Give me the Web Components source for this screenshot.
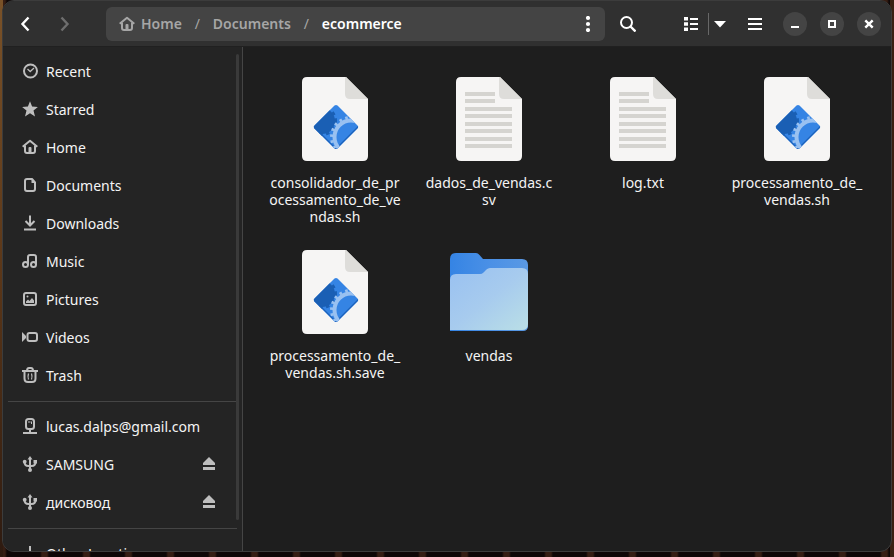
<!DOCTYPE html>
<html lang="en">
<head>
<meta charset="utf-8">
<title>ecommerce</title>
<style>
  html, body { height: 100%; }
  body {
    margin: 0;
    overflow: hidden;
    font: 14px/17px "Noto Sans", "Open Sans", sans-serif;
    color: #f4f4f4;
    background:
      linear-gradient(#7a5228, #5a3618 50%, #2d1a10) left / 3px 100% no-repeat,
      linear-gradient(90deg, transparent calc(100% - 4px), #3a2013 0) no-repeat,
      repeating-linear-gradient(90deg, #361e14 0 5px, #0e0707 7px 40px, #361e14 42px);
  }
</style>
</head>
<body>
<file-window>
  <header-bar slot="header">
    <path-crumb icon="home">Home</path-crumb>
    <path-crumb>Documents</path-crumb>
    <path-crumb current>ecommerce</path-crumb>
  </header-bar>
  <side-bar slot="sidebar">
    <place-row icon="recent">Recent</place-row>
    <place-row icon="star">Starred</place-row>
    <place-row icon="home">Home</place-row>
    <place-row icon="doc">Documents</place-row>
    <place-row icon="down">Downloads</place-row>
    <place-row icon="music">Music</place-row>
    <place-row icon="pic">Pictures</place-row>
    <place-row icon="video">Videos</place-row>
    <place-row icon="trash">Trash</place-row>
    <side-rule></side-rule>
    <place-row icon="remote">lucas.dalps@gmail.com</place-row>
    <place-row icon="usb" ejectable>SAMSUNG</place-row>
    <place-row icon="usb" ejectable>дисковод</place-row>
    <side-rule></side-rule>
    <place-row icon="plus">Other Locations</place-row>
  </side-bar>
  <file-grid slot="files">
    <file-item kind="script">consolidador_de_pr<br>ocessamento_de_ve<br>ndas.sh</file-item>
    <file-item kind="text">dados_de_vendas.c<br>sv</file-item>
    <file-item kind="text">log.txt</file-item>
    <file-item kind="script">processamento_de_<br>vendas.sh</file-item>
    <file-item kind="script">processamento_de_<br>vendas.sh.save</file-item>
    <file-item kind="folder">vendas</file-item>
  </file-grid>
</file-window>
<script>
const svg16 = body => `<svg width="16" height="16" viewBox="0 0 16 16" fill="none" stroke="currentColor" stroke-width="2" aria-hidden="true">${body}</svg>`;
const icons = {
  recent: '<circle cx="8.500" cy="8" r="6.500"/><path d="M5.500 6l2.700 2.500L12 5" stroke-width="1.300"/>',
  star: '<path fill="currentColor" stroke="none" d="M8 0.300l2.100 5.200 5.800.4-4.400 3.700 1.500 5.900-5-3.200-5 3.200 1.500-5.900L.1 5.900l5.800-.4z"/>',
  home: '<path d="M.7 7.800L8 1.800l7.300 6" stroke-linejoin="round"/><path d="M3 6.500V12q0 2 2 2h6q2 0 2-2V6.500"/><path d="M6.500 14V9q0-1 1-1h1q1 0 1 1v5z" fill="currentColor" stroke="none"/>',
  doc: '<path d="M5 2h5l3 3.500V12q0 2-2 2H5q-2 0-2-2V4q0-2 2-2z" stroke-linejoin="round"/><path d="M9.500 2v4H13z" fill="currentColor" stroke="none"/>',
  down: '<path d="M8 .5v10M3.500 6L8 10.500 12.500 6M2 14.500h12"/>',
  music: '<circle cx="3.500" cy="11.500" r="2.500"/><circle cx="11.500" cy="11.500" r="2.500"/><path d="M6 11.500V4q0-2 2-2h4q2 0 2 2v7.500" stroke-width="2"/>',
  pic: '<rect x="2" y="2" width="12" height="12" rx="2"/><path d="M4 12V10.500l2-2 1.500 1.500L10 7l2 2.500V12z" fill="currentColor" stroke="none"/><circle cx="5.500" cy="5.500" r="1" fill="currentColor" stroke="none"/>',
  video: '<rect x="5.500" y="4" width="9.500" height="8" rx="2"/><path d="M0 3l4 4v2l-4 4z" fill="currentColor" stroke="none"/>',
  trash: '<path d="M0 4h16M2.500 4v7.500q0 3.500 3.500 3.500h4q3.500 0 3.500-3.500V4M5 4q0-3 2-3h2q2 0 2 3"/><path d="M6.500 6.500q-1 3 0 6M9.500 6.500q1 3 0 6" stroke-width="1.200"/>',
  remote: '<rect x="4" y="1" width="8" height="10" rx="2.500"/><path d="M8 11v4M1 15h14"/><path d="M6 4h2.500M9.500 3.500v2.500" stroke-width="1"/>',
  usb: '<path d="M8 2v12M2.500 6q0 4 4 4h3q4 0 4-4"/><circle cx="8" cy="14" r="2" fill="currentColor" stroke="none"/><circle cx="2.700" cy="5.700" r="1.900" fill="currentColor" stroke="none"/><rect x="11.500" y="4" width="3.500" height="3.500" fill="currentColor" stroke="none"/><path d="M8 0l2.500 3.500h-5z" fill="currentColor" stroke="none"/>',
  plus: '<path d="M8 1v14M1 8h14"/>',
  eject: '<path d="M8 1l6 6v2H2V7z" fill="currentColor" stroke="none"/><path d="M2 12.500h12" stroke-width="3"/>',
  back: '<path d="M11.500 1.500L5.500 8l6 6.500" stroke-width="2.400"/>',
  next: '<path d="M4.500 1.500L10.500 8l-6 6.500" stroke-width="2.400"/>',
  search: '<circle cx="6.500" cy="6.500" r="5.500"/><path d="M10.500 10.500l5 5" stroke-width="2.400"/>',
  list: '<path d="M7 3h8M7 8h8M7 13h8"/><path d="M1 1h4v3.600H1zM1 6.200h4v3.600H1zM1 11.400h4V15H1z" fill="currentColor" stroke="none"/>',
  arrow: '<path d="M2 5h12l-6 6.500z" fill="currentColor" stroke="none"/>',
  menu: '<path d="M1 3h14M1 8h14M1 13h14"/>',
  dots: '<g fill="currentColor" stroke="none"><circle cx="8" cy="2" r="2.100"/><circle cx="8" cy="8" r="2.100"/><circle cx="8" cy="14" r="2.100"/></g>',
  min: '<path d="M4 11h8"/>',
  max: '<rect x="5" y="5" width="6" height="6"/>',
  close: '<path d="M4.300 4.300l7.400 7.400M11.700 4.300l-7.400 7.400" stroke-width="2.400"/>'
};
const sheet = '<path d="M20 6h39l22 22v57q0 5-5 5H20q-5 0-5-5V11q0-5 5-5z" fill="#f6f5f4"/><path d="M58 6v17q0 5 5 5h18L59 6z" fill="#deddda"/>';
const art = {
  script: sheet + `
    <clipPath id="d"><path d="M47.500 34.600q1.500-1.200 3 0l20 20q1.300 1.400 0 2.800l-20 20q-1.500 1.200-3 0l-20-20q-1.300-1.400 0-2.800z"/></clipPath>
    <g clip-path="url(#d)">
      <path d="M20 30h60v50H20z" fill="#3584e4"/>
      <path d="M26 56l23 23 23-23v-2l-23 23-23-23z" fill="#1c62bb"/>
      <circle cx="35" cy="50" r="13" fill="#1a5fb4"/>
      <circle cx="35" cy="50" r="13.500" fill="none" stroke="#1a5fb4" stroke-width="3" stroke-dasharray="3.400 3.400"/>
      <circle cx="64" cy="66" r="16.500" fill="none" stroke="#99c1f1" stroke-width="4"/>
      <circle cx="64" cy="66" r="19.500" fill="none" stroke="#99c1f1" stroke-width="3" stroke-dasharray="2.600 3.500"/>
    </g>`,
  text: sheet + '<path d="M24 23h30M24 30h30M24 38h47M24 45h47M24 53h47M24 60h47M24 68h47M24 75h47" stroke="#d5d4d0" stroke-width="4"/>',
  folder: `<defs><linearGradient id="b"><stop stop-color="#3584e4"/><stop offset=".5" stop-color="#4a90e6"/><stop offset="1" stop-color="#5a99e4"/></linearGradient>
    <linearGradient id="f" x2="1" y2="1"><stop stop-color="#99c1f1"/><stop offset=".5" stop-color="#a7cbee"/><stop offset="1" stop-color="#badfe6"/></linearGradient></defs>
    <path d="M15 9h20q2 0 3.500 2l3.500 4h39q6 0 6 6v61q0 5-5 5H9V15q0-6 6-6z" fill="url(#b)"/>
    <path d="M15 30h24q2 0 3.500-1.500l3-3Q47 24 49 24h32q6 0 6 6v50q0 6-6 6H9V36q0-6 6-6z" fill="url(#f)"/>`
};
const base = `<style>
  * { box-sizing: border-box; }
  svg { display: block; flex: none; }
  button, a { font: inherit; color: inherit; text-decoration: none; }
  button { border: 0; padding: 0; background: none; display: flex; align-items: center; justify-content: center; }
</style>`;
function define(name, build) {
  customElements.define(name, class extends HTMLElement {
    constructor() { super(); this.attachShadow({ mode: 'open' }); }
    connectedCallback() { this.shadowRoot.innerHTML = base + build(this); }
  });
}

define('file-window', () => `<style>
  :host { display: block; height: 100%; padding: 0 2px 5px; box-sizing: border-box; }
  main { height: 100%; display: grid; grid-template: 46px minmax(0, 1fr) / 240px minmax(0, 1fr);
    border: 1px solid #3c3c3c; border-radius: 12px; overflow: hidden; background: #1e1e1e; }
  .top { grid-column: 1 / -1; background: #303030; border-bottom: 1px solid #202020; }
  .side { background: #242424; border-right: 1px solid #454545; overflow: hidden; }
</style>
<main><div class="top"><slot name="header"></slot></div>
<div class="side"><slot name="sidebar"></slot></div>
<div><slot name="files"></slot></div></main>`);

define('header-bar', () => {
  const b = (icon, label, cls = '') => `<button class="${cls}" aria-label="${label}">${svg16(icons[icon])}</button>`;
  return `<style>
  :host { display: flex; align-items: center; height: 45px; padding: 0 10px 0 5px; color: #fff; }
  button { width: 34px; height: 34px; flex: none; }
  .nav { display: flex; gap: 6px; margin-right: 24px; }
  .off { color: #6e6e6e; }
  nav { flex: 1; min-width: 0; height: 34px; display: flex; align-items: center; padding-left: 13px; background: #444; border-radius: 6px; }
  nav button { margin-left: auto; }
  .search { margin: 0 29px 0 6px; }
  .split { width: 22px; }
  .line { width: 1px; height: 22px; background: #686868; }
  .menu { margin: 0 11px 0 7px; }
  .win { display: flex; gap: 13px; }
  .win button { width: 24px; height: 24px; border-radius: 12px; background: #444; }
</style>
<div class="nav">${b('back', 'Back')}${b('next', 'Forward', 'off')}</div>
<nav aria-label="Path"><slot></slot>${b('dots', 'Folder menu')}</nav>
${b('search', 'Search', 'search')}
${b('list', 'List view')}<span class="line"></span>${b('arrow', 'View options', 'split')}
${b('menu', 'Main menu', 'menu')}
<div class="win">${b('min', 'Minimize')}${b('max', 'Maximize')}${b('close', 'Close')}</div>`;
});

define('path-crumb', el => `<style>
  :host { display: flex; align-items: center; color: #a6a6a6; font-weight: 600; }
  :host([current]) { color: #fff; }
  a { display: flex; align-items: center; gap: 6px; }
  span { width: 31px; text-align: center; font-weight: 400; }
</style><a href="#">${el.hasAttribute('icon') ? svg16(icons[el.getAttribute('icon')]) : ''}<slot></slot></a>${el.hasAttribute('current') ? '' : '<span>/</span>'}`);

define('side-bar', () => `<style>
  :host { display: block; position: relative; height: 100%; padding: 5px; box-sizing: border-box; }
  i { position: absolute; top: 7px; right: 3px; bottom: 31px; width: 3px; border-radius: 2px; background: #3a3a3a; }
</style><nav aria-label="Places"><slot></slot></nav><i></i>`);

define('side-rule', () => '<style>:host { display: block; height: 1px; margin: 7px 0 5px; background: #454545; }</style>');

define('place-row', el => `<style>
  :host { display: flex; align-items: center; height: 38px; padding: 0 20px 0 14px; }
  a { flex: 1; display: flex; align-items: center; gap: 8px; }
  svg { color: #bebebe; }
</style><a href="#">${svg16(icons[el.getAttribute('icon')])}<slot></slot></a>${el.hasAttribute('ejectable') ? `<button aria-label="Eject">${svg16(icons.eject)}</button>` : ''}`);

define('file-grid', () => `<style>
  :host { display: grid; grid-template-columns: repeat(auto-fill, minmax(132px, 1fr)); gap: 19px 22px; padding: 24px 28px 24px 26px; }
</style><slot></slot>`);

define('file-item', el => `<style>
  :host { display: block; }
  button { width: 100%; flex-direction: column; gap: 7px; text-align: center; }
</style><button><svg width="96" height="96" viewBox="0 0 96 96" aria-hidden="true">${art[el.getAttribute('kind')]}</svg><span><slot></slot></span></button>`);
</script>
</body>
</html>
